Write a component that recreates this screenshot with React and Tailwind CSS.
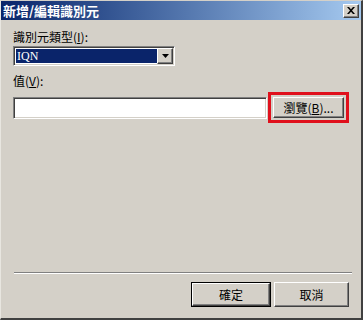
export default function App() {
  const cjk = { fontFamily: '"Noto Sans CJK TC", "Liberation Sans", sans-serif' };
  const raised =
    "border border-t-white border-l-white border-r-[#404040] border-b-[#404040] shadow-[inset_-1px_-1px_0_#808080,inset_1px_1px_0_#d4d0c8]";
  return (
    <div className="w-[363px] h-[320px] bg-[#d4d0c8] flex flex-col border-l border-t border-l-[#e8e6e0] border-t-[#d4d0c8] border-r-2 border-b-2 border-r-[#404040] border-b-[#404040] text-black" style={cjk}>
      <div className="h-[19px] flex items-center justify-between pl-[2px] pr-[2px] bg-gradient-to-r from-[#0a246a] to-[#a6caf0]">
        <span className="text-white font-bold text-[13px] leading-none">新增/編輯識別元</span>
        <div className={`w-[16px] h-[14px] bg-[#d4d0c8] flex items-center justify-center ${raised}`}>
          <svg width="8" height="7" viewBox="0 0 8 7">
            <path d="M0 0h2l2 2.2L6 0h2L5 3.5 8 7H6L4 4.8 2 7H0l3-3.5z" fill="#000" />
          </svg>
        </div>
      </div>
      <div className="flex-1 flex flex-col px-[12px] pt-[10px]">
        <div className="text-[12px] leading-[14px]">識別元類型(<span className="underline">I</span>):</div>
        <div className="mt-[2px] w-[162px] h-[20px] flex bg-white border border-t-[#808080] border-l-[#808080] border-r-white border-b-white shadow-[inset_1px_1px_0_#404040,inset_-1px_-1px_0_#d4d0c8] p-[2px]">
          <div className="flex-1 bg-[#0a246a] text-white text-[12px] leading-[14px] px-[1px] font-['Liberation_Serif',serif]">IQN</div>
          <div className={`w-[16px] bg-[#d4d0c8] flex items-center justify-center -my-[1px] -mr-[1px] ${raised}`}>
            <svg width="7" height="4" viewBox="0 0 7 4"><path d="M0 0h7L3.5 4z" fill="#000" /></svg>
          </div>
        </div>
        <div className="mt-[8px] text-[12px] leading-[14px]">值(<span className="underline">V</span>):</div>
        <div className="mt-[4px] flex items-center">
          <div className="w-[256px] h-[22px] bg-white border border-t-[#808080] border-l-[#808080] border-r-white border-b-white shadow-[inset_1px_1px_0_#404040,inset_-1px_-1px_0_#d4d0c8]" />
          <div className="ml-[1px] border-[3px] border-[#e0101c] p-[2px]">
            <div className={`w-[71px] h-[21px] bg-[#d4d0c8] flex items-center justify-center text-[12px] ${raised}`}>
              瀏覽(<span className="underline">B</span>)...
            </div>
          </div>
        </div>
        <div className="flex-1" />
        <div className="w-[338px] ml-[1px] border-t border-t-[#808080] border-b border-b-white" />
        <div className="flex justify-end gap-[3px] mt-[8px] mb-[11px]">
          <div className="w-[80px] h-[25px] border border-black">
            <div className={`w-full h-full bg-[#d4d0c8] flex items-center justify-center text-[12px] ${raised}`}>確定</div>
          </div>
          <div className={`w-[75px] h-[25px] bg-[#d4d0c8] flex items-center justify-center text-[12px] ${raised}`}>取消</div>
        </div>
      </div>
    </div>
  );
}
